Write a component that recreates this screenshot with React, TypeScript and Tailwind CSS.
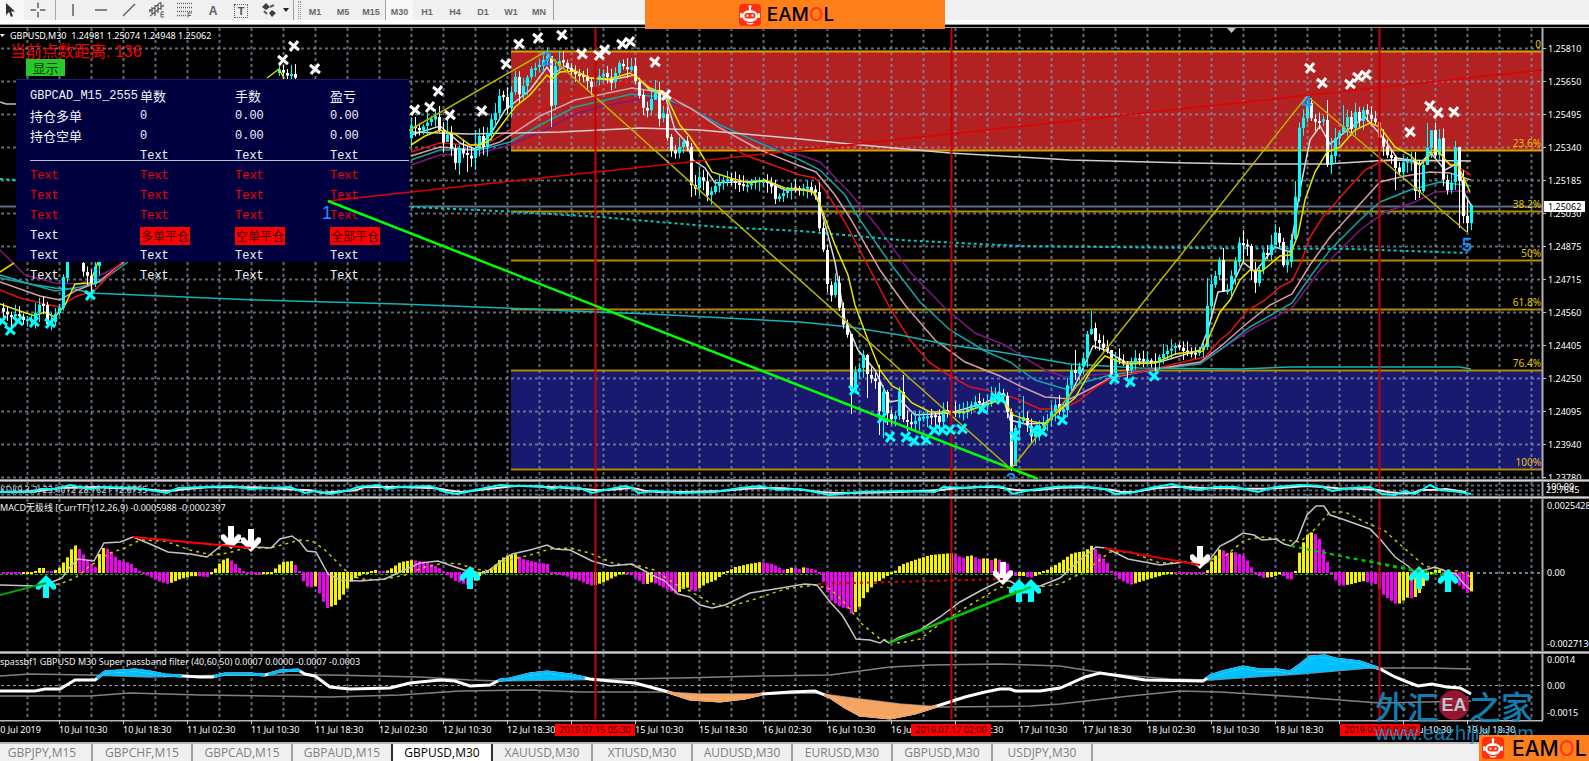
import type { ReactNode } from "react";

type Pt = [number, number];

const TIMEFRAMES = ["M1", "M5", "M15", "M30", "H1", "H4", "D1", "W1", "MN"];

const TABS = [
  "GBPJPY,M15",
  "GBPCHF,M15",
  "GBPCAD,M15",
  "GBPAUD,M15",
  "GBPUSD,M30",
  "XAUUSD,M30",
  "XTIUSD,M30",
  "AUDUSD,M30",
  "EURUSD,M30",
  "GBPUSD,M30",
  "USDJPY,M30",
];

const PRICES = [
  "1.25810", "1.25650", "1.25495", "1.25340", "1.25185", "1.25030", "1.24875",
  "1.24715", "1.24560", "1.24405", "1.24250", "1.24095", "1.23940", "1.23780",
];

// One label every 64px, an empty one where a marked time takes the slot
const TIMES = [
  "10 Jul 2019", "10 Jul 10:30", "10 Jul 18:30", "11 Jul 02:30", "11 Jul 10:30",
  "11 Jul 18:30", "12 Jul 02:30", "12 Jul 10:30", "12 Jul 18:30", "",
  "15 Jul 10:30", "15 Jul 18:30", "16 Jul 02:30", "16 Jul 10:30", "16 Jul 18:30",
  "17 Jul 02:30", "17 Jul 10:30", "17 Jul 18:30", "18 Jul 02:30", "18 Jul 10:30",
  "18 Jul 18:30", "", "19 Jul 10:30", "19 Jul 18:30",
];

const MARKED_TIMES = [
  { x: 555, label: "2019.07.15 05:30" },
  { x: 911, label: "2019.07.17 02:00" },
  { x: 1340, label: "2019.07.19 07:30" },
];

const RED_LINES = [595, 951, 1379];

const FIBS = [
  { y: 51, label: "0" },
  { y: 150, label: "23.6%" },
  { y: 211, label: "38.2%" },
  { y: 260, label: "50%" },
  { y: 309, label: "61.8%" },
  { y: 370, label: "76.4%" },
  { y: 469, label: "100%" },
];

// Close price path, one candle every 4px
const CLOSE_LEFT: Pt[] = [
  [0, 309], [8, 316], [16, 314], [24, 321], [32, 319], [39, 304], [43, 305], [47, 324],
  [51, 322], [55, 313], [59, 308], [63, 278], [67, 262],
];

const CLOSE_MID: Pt[] = [[79, 263], [83, 272], [87, 276], [91, 284], [95, 266], [98, 262]];

const CLOSE_RIGHT: Pt[] = [
  [407, 138], [411, 126], [419, 130], [427, 122], [435, 117], [439, 130], [443, 142], [447, 134],
  [455, 163], [459, 149], [463, 153], [471, 158], [475, 148], [479, 136], [483, 147], [491, 120],
  [495, 113], [499, 95], [503, 97], [507, 108], [511, 92], [515, 77], [519, 95], [523, 86],
  [531, 68], [539, 66], [547, 56], [551, 105], [555, 66], [560, 59], [567, 68], [575, 74],
  [583, 76], [591, 87], [595, 80], [603, 73], [611, 82], [619, 64], [627, 70], [631, 66],
  [635, 82], [643, 108], [647, 110], [655, 90], [659, 118], [663, 114], [667, 137], [671, 150],
  [675, 153], [683, 141], [687, 147], [691, 185], [697, 190], [700, 171], [707, 195], [711, 192],
  [715, 186], [725, 178], [735, 183], [745, 186], [755, 181], [765, 181], [772, 187], [775, 199],
  [783, 193], [790, 187], [800, 189], [807, 187], [815, 192], [819, 228], [823, 250], [827, 285],
  [831, 295], [835, 283], [839, 308], [843, 325], [847, 334], [851, 390], [855, 372], [859, 368],
  [863, 355], [867, 375], [875, 382], [879, 412], [883, 392], [887, 414], [891, 419], [895, 416],
  [899, 392], [903, 420], [911, 424], [920, 417], [930, 415], [935, 416], [939, 422], [943, 410],
  [955, 412], [965, 412], [975, 401], [985, 407], [992, 395], [1000, 393], [1003, 396], [1007, 412],
  [1011, 466], [1015, 428], [1019, 421], [1023, 418], [1027, 426], [1031, 437], [1039, 426],
  [1047, 420], [1055, 404], [1059, 412], [1063, 410], [1067, 385], [1071, 370], [1075, 374],
  [1083, 358], [1087, 334], [1091, 328], [1095, 340], [1103, 347], [1107, 350], [1111, 373],
  [1115, 358], [1121, 362], [1127, 370], [1133, 358], [1145, 360], [1155, 362], [1165, 352],
  [1175, 345], [1185, 352], [1195, 353], [1203, 347], [1207, 306], [1211, 285], [1215, 275],
  [1219, 260], [1223, 292], [1227, 290], [1231, 275], [1235, 262], [1239, 243], [1247, 246],
  [1251, 270], [1255, 283], [1259, 270], [1263, 253], [1267, 255], [1271, 245], [1275, 233],
  [1279, 242], [1283, 265], [1287, 262], [1291, 239], [1295, 197], [1299, 128], [1303, 118],
  [1307, 103], [1311, 119], [1317, 122], [1323, 120], [1327, 165], [1331, 156], [1335, 138],
  [1343, 127], [1347, 117], [1351, 128], [1355, 112], [1359, 121], [1363, 110], [1367, 115],
  [1375, 122], [1379, 138], [1387, 155], [1393, 158], [1397, 177], [1403, 162], [1411, 161],
  [1415, 190], [1419, 191], [1423, 165], [1427, 148], [1431, 130], [1435, 155], [1439, 138],
  [1443, 180], [1447, 190], [1451, 182], [1455, 147], [1459, 180], [1463, 216], [1467, 223],
  [1471, 205],
];

// Wicks that reach well past the body: x -> [high, low]
const LONG_WICKS: Record<number, Pt> = {
  439: [106, 132], 459: [145, 175], 467: [146, 172], 475: [130, 170], 551: [92, 127], 447: [120, 140],
  631: [58, 72], 655: [80, 96], 691: [143, 197], 775: [180, 204], 851: [334, 414], 867: [354, 398],
  879: [365, 435], 883: [385, 438], 887: [390, 425], 903: [375, 422], 1015: [425, 466], 1023: [396, 424],
  1091: [311, 335], 1075: [350, 380], 1111: [350, 378], 1207: [278, 350], 1223: [248, 292],
  1275: [224, 237], 1243: [230, 262], 1255: [262, 293], 1295: [181, 240], 1327: [100, 167],
  1331: [138, 174], 1343: [105, 130], 1395: [155, 190], 1419: [160, 198], 1427: [123, 150],
  1431: [131, 158], 1455: [141, 190], 1459: [148, 228], 1467: [200, 232], 1471: [204, 230],
};

const FAST_MA: Pt[] = [
  [411, 145], [425, 136], [440, 130], [455, 134], [470, 145], [480, 145], [490, 140], [500, 127],
  [515, 107], [530, 95], [547, 75], [552, 79], [560, 72], [575, 71], [590, 78], [610, 79],
  [630, 73], [640, 80], [650, 88], [660, 92], [668, 100], [680, 125], [690, 137], [700, 152],
  [712, 172], [730, 178], [750, 183], [765, 180], [785, 188], [800, 189], [815, 193], [822, 210],
  [835, 245], [848, 275], [855, 305], [868, 340], [880, 370], [892, 386], [900, 390], [912, 403],
  [930, 412], [965, 412], [985, 405], [1000, 400], [1007, 405], [1013, 415], [1030, 421],
  [1045, 424], [1060, 410], [1075, 398], [1090, 372], [1105, 356], [1125, 364], [1155, 363],
  [1175, 354], [1190, 352], [1203, 351], [1210, 335], [1220, 312], [1230, 300], [1240, 280],
  [1250, 270], [1262, 271], [1280, 256], [1290, 255], [1298, 235], [1305, 200], [1315, 172],
  [1327, 152], [1340, 147], [1355, 130], [1370, 123], [1380, 127], [1395, 147], [1410, 155],
  [1420, 165], [1430, 155], [1437, 150], [1450, 165], [1458, 165], [1470, 192],
];

const MA_LINES: { color: string; points: Pt[] }[] = [
  {
    color: "#7d1682",
    points: [
      [411, 165], [440, 155], [480, 153], [510, 145], [545, 130], [575, 114], [600, 107], [640, 99],
      [660, 100], [690, 108], [730, 130], [780, 150], [800, 155], [820, 162], [850, 193], [880, 230],
      [910, 272], [945, 308], [975, 333], [1005, 345], [1025, 358], [1045, 370], [1065, 377],
      [1090, 375], [1120, 373], [1160, 368], [1200, 363], [1250, 330], [1292, 308], [1320, 270],
      [1360, 230], [1385, 212], [1415, 202], [1435, 192], [1460, 191], [1471, 193],
    ],
  },
  {
    color: "#12a5a5",
    points: [
      [411, 160], [440, 150], [480, 150], [510, 142], [540, 125], [575, 107], [632, 94], [660, 97],
      [690, 108], [720, 125], [760, 143], [800, 160], [820, 170], [845, 195], [860, 220], [890, 263],
      [920, 302], [950, 330], [985, 351], [1010, 362], [1035, 380], [1065, 389], [1085, 382],
      [1110, 375], [1150, 370], [1200, 364], [1220, 350], [1250, 327], [1292, 303], [1310, 277],
      [1330, 250], [1360, 220], [1380, 202], [1410, 190], [1440, 182], [1471, 186],
    ],
  },
  {
    color: "#d89ca4",
    points: [
      [411, 156], [440, 147], [475, 150], [500, 142], [540, 116], [575, 100], [632, 88], [660, 92],
      [690, 108], [720, 128], [760, 150], [800, 166], [816, 172], [835, 195], [850, 218], [880, 270],
      [905, 305], [935, 340], [965, 362], [1000, 376], [1020, 386], [1045, 397], [1070, 399],
      [1090, 389], [1110, 378], [1150, 370], [1200, 362], [1220, 347], [1245, 325], [1270, 305],
      [1292, 294], [1310, 265], [1330, 237], [1350, 215], [1380, 182], [1405, 176], [1430, 172],
      [1450, 173], [1471, 180],
    ],
  },
  {
    color: "#e31212",
    points: [
      [411, 152], [440, 143], [470, 145], [490, 142], [515, 127], [545, 105], [570, 95], [600, 87],
      [632, 80], [650, 85], [670, 97], [690, 113], [720, 138], [745, 155], [770, 164], [800, 175],
      [815, 178], [825, 190], [845, 222], [865, 260], [890, 308], [910, 340], [930, 363], [950, 376],
      [970, 387], [1000, 393], [1020, 400], [1040, 409], [1063, 409], [1080, 400], [1095, 388],
      [1115, 376], [1140, 372], [1170, 365], [1205, 357], [1220, 340], [1230, 332], [1247, 311],
      [1265, 300], [1280, 287], [1292, 281], [1300, 265], [1310, 237], [1322, 218], [1345, 192],
      [1365, 170], [1380, 162], [1400, 160], [1415, 164], [1440, 160], [1455, 165], [1471, 175],
    ],
  },
  {
    color: "#d8d8d8",
    points: [
      [411, 135], [440, 126], [460, 143], [475, 149], [490, 135], [505, 110], [530, 90], [547, 67],
      [552, 75], [565, 66], [590, 78], [610, 80], [635, 75], [650, 90], [665, 95], [675, 130],
      [685, 141], [693, 160], [705, 168], [715, 183], [735, 182], [765, 181], [785, 190], [812, 190],
      [820, 205], [835, 262], [845, 320], [858, 350], [875, 370], [890, 402], [900, 400], [915, 415],
      [950, 413], [985, 403], [1002, 394], [1010, 420], [1025, 424], [1045, 423], [1065, 405],
      [1080, 375], [1093, 346], [1105, 350], [1125, 362], [1160, 362], [1200, 350], [1208, 330],
      [1218, 292], [1230, 290], [1243, 262], [1255, 272], [1275, 247], [1290, 252], [1300, 190],
      [1310, 140], [1320, 126], [1330, 144], [1350, 128], [1365, 117], [1385, 140], [1397, 158],
      [1410, 160], [1420, 165], [1430, 152], [1445, 170], [1458, 163], [1465, 195], [1471, 205],
    ],
  },
  { color: "#7d1682", points: [[0, 250], [25, 275], [55, 283], [80, 284], [105, 273], [125, 262]] },
  { color: "#12b5b5", points: [[0, 275], [30, 284], [55, 288], [75, 289], [90, 293], [257, 300], [400, 304], [530, 309], [570, 311], [650, 314], [800, 322], [850, 327], [900, 335], [950, 345], [1000, 352], [1070, 364], [1140, 368], [1240, 369], [1290, 367], [1460, 367], [1471, 369]] },
  { color: "#12a5a5", points: [[0, 278], [30, 284], [55, 291], [80, 287], [100, 282], [128, 262]] },
  { color: "#d89ca4", points: [[0, 282], [40, 296], [60, 300], [75, 291], [98, 282], [124, 262]] },
  { color: "#e31212", points: [[0, 290], [20, 298], [45, 304], [60, 307], [75, 297], [95, 290], [122, 262]] },
  { color: "#e5e500", points: [[0, 304], [20, 311], [35, 316], [44, 312], [55, 317], [65, 305], [75, 284], [90, 283], [98, 262]] },
  { color: "#c0c0c0", points: [[0, 102], [6, 104], [16, 104]] },
  {
    color: "#d5cccc",
    points: [
      [411, 132], [470, 134], [560, 132], [640, 128], [700, 130], [800, 139], [850, 144], [950, 153],
      [1070, 160], [1189, 163], [1250, 164], [1327, 164], [1390, 160], [1471, 161],
    ],
  },
];

const SELL_MARKS: Pt[] = [
  [283, 60], [294, 46], [315, 69], [415, 110], [430, 107], [438, 91], [450, 115], [482, 111],
  [506, 64], [519, 44], [538, 38], [562, 35], [582, 54], [599, 55], [605, 50], [622, 44], [630, 42],
  [655, 62], [666, 95], [1310, 68], [1322, 83], [1350, 84], [1358, 77], [1366, 75], [1410, 132],
  [1430, 106], [1438, 113], [1454, 112],
];

const BUY_MARKS: Pt[] = [
  [2, 321], [10, 330], [18, 321], [34, 322], [50, 323], [90, 295], [854, 390], [882, 418],
  [890, 437], [906, 437], [914, 441], [926, 440], [934, 430], [942, 430], [950, 430], [962, 429],
  [982, 409], [996, 397], [1001, 399], [1015, 436], [1034, 430], [1042, 432], [1062, 420],
  [1114, 379], [1130, 382], [1154, 376],
];

const OSC: Pt[] = [
  [0, 492], [33, 492], [40, 489], [55, 489], [70, 485], [90, 489], [105, 487], [135, 488],
  [155, 491], [167, 493], [178, 488], [205, 487], [230, 486], [250, 489], [290, 487], [305, 493],
  [315, 491], [330, 494], [350, 490], [358, 487], [378, 485], [387, 489], [400, 487], [430, 486],
  [445, 492], [457, 494], [475, 490], [500, 485], [512, 486], [540, 486], [552, 489], [560, 487],
  [580, 488], [592, 493], [605, 490], [625, 486], [632, 488], [638, 493], [655, 491], [680, 493],
  [715, 492], [740, 488], [760, 486], [778, 490], [800, 489], [815, 492], [830, 495], [860, 492],
  [900, 491], [935, 492], [943, 487], [970, 488], [990, 486], [1003, 487], [1013, 494], [1030, 490],
  [1055, 487], [1080, 486], [1105, 489], [1115, 494], [1130, 493], [1150, 488], [1172, 484],
  [1185, 488], [1200, 490], [1215, 487], [1235, 487], [1258, 492], [1275, 487], [1300, 485],
  [1320, 486], [1332, 491], [1350, 488], [1370, 487], [1382, 494], [1395, 495], [1405, 491],
  [1415, 494], [1430, 485], [1440, 490], [1460, 492], [1471, 494],
];

// Histogram height in px, positive is up
const HIST: Pt[] = [
  [0, -1], [20, -2], [34, -1], [38, 5], [44, 5], [48, 1], [58, 4], [68, 17], [72, 26], [76, 28],
  [88, 12], [96, 5], [99, 19], [103, 25], [109, 24], [113, 18], [120, 12], [130, 10], [137, 3],
  [142, -1], [150, -5], [160, -10], [168, -12], [180, -7], [192, -4], [207, -5], [212, 0], [216, 6],
  [222, 13], [228, 15], [234, 10], [240, 4], [244, -1], [260, -3], [272, 0], [276, 6], [282, 11],
  [292, 12], [298, 4], [302, -8], [308, -16], [317, -14], [320, -25], [327, -36], [335, -33],
  [345, -20], [352, -8], [362, -2], [375, 3], [382, 0], [390, 4], [400, 11], [412, 13], [425, 11],
  [438, 6], [444, -1], [455, -9], [467, -13], [476, -8], [482, 0], [492, 5], [500, 14], [508, 18],
  [516, 19], [522, 14], [530, 12], [547, 9], [550, -1], [565, -4], [580, -9], [592, -14],
  [604, -10], [620, -2], [632, -3], [644, -13], [652, -10], [660, -14], [676, -22], [686, -15],
  [694, -20], [705, -12], [716, -8], [724, 0], [735, 6], [748, 9], [760, 11], [772, 9], [784, 3],
  [793, 6], [799, 4], [804, 6], [816, 3], [819, -2], [823, -10], [830, -28], [840, -35], [848, -37],
  [852, -43], [858, -37], [864, -24], [873, -13], [882, -7], [892, -1], [900, 8], [914, 13],
  [930, 18], [952, 20], [962, 15], [970, 18], [979, 14], [986, 15], [991, 13], [996, 15],
  [1008, 9], [1012, -4], [1024, -4], [1030, -6], [1040, -2], [1048, 4], [1060, 11], [1072, 20],
  [1085, 22], [1092, 28], [1098, 20], [1107, 10], [1112, -1], [1120, -8], [1130, -13], [1145, -8],
  [1160, -4], [1170, 0], [1190, -1], [1205, -2], [1210, 10], [1220, 25], [1226, 20], [1234, 21],
  [1244, 17], [1250, 8], [1254, -1], [1262, -6], [1272, -5], [1280, -2], [1290, -9], [1294, -3],
  [1300, 25], [1308, 40], [1313, 41], [1320, 33], [1328, 8], [1332, -5], [1340, -14], [1352, -12],
  [1362, -9], [1375, -12], [1384, -24], [1397, -33], [1408, -25], [1413, -27], [1420, -20],
  [1426, -8], [1430, -1], [1437, 5], [1444, -1], [1455, -10], [1467, -21], [1472, -19],
];

const MACD: Pt[] = [
  [0, 586], [35, 587], [50, 584], [62, 579], [70, 568], [78, 560], [94, 562], [104, 544], [120, 543],
  [133, 538], [150, 545], [168, 553], [190, 555], [207, 558], [222, 546], [240, 543], [256, 548],
  [271, 549], [280, 540], [292, 537], [300, 543], [307, 552], [316, 553], [328, 575], [340, 581],
  [360, 582], [385, 580], [400, 573], [420, 564], [438, 562], [455, 568], [470, 573], [485, 574],
  [500, 563], [512, 555], [530, 551], [547, 546], [555, 550], [570, 551], [592, 562], [610, 567],
  [632, 565], [650, 575], [665, 582], [678, 595], [690, 598], [700, 606], [712, 609], [725, 606],
  [750, 594], [775, 590], [805, 585], [817, 586], [830, 603], [842, 616], [848, 626], [856, 640],
  [870, 641], [880, 644], [884, 641], [889, 644], [900, 638], [920, 631], [940, 618], [960, 603],
  [980, 592], [1000, 582], [1010, 582], [1018, 587], [1040, 587], [1060, 579], [1080, 561],
  [1096, 548], [1106, 549], [1128, 560], [1160, 566], [1185, 563], [1200, 567], [1208, 563],
  [1220, 547], [1232, 541], [1243, 534], [1254, 536], [1262, 541], [1276, 540], [1284, 545],
  [1291, 547], [1297, 541], [1307, 516], [1316, 507], [1324, 507], [1330, 516], [1345, 521],
  [1370, 530], [1380, 540], [1395, 558], [1408, 567], [1414, 573], [1425, 571], [1435, 568],
  [1445, 572], [1456, 575], [1464, 585], [1471, 591],
];

const SIGNAL: Pt[] = [
  [35, 587], [60, 585], [75, 579], [90, 567], [110, 554], [125, 549], [140, 541], [165, 542],
  [190, 551], [212, 556], [228, 554], [245, 549], [270, 549], [285, 545], [300, 541], [312, 542],
  [325, 551], [345, 571], [360, 580], [380, 581], [405, 576], [425, 568], [445, 564], [460, 565],
  [475, 570], [490, 572], [505, 562], [530, 556], [550, 550], [570, 549], [590, 554], [615, 565],
  [635, 566], [655, 571], [675, 585], [690, 592], [710, 604], [728, 608], [755, 600], [785, 590],
  [815, 586], [830, 590], [845, 604], [862, 625], [880, 640], [900, 644], [920, 640], [945, 621],
  [970, 606], [1000, 588], [1025, 590], [1060, 585], [1085, 572], [1110, 553], [1130, 553],
  [1160, 564], [1200, 563], [1225, 557], [1245, 541], [1262, 538], [1285, 541], [1300, 543],
  [1315, 530], [1330, 513], [1345, 513], [1365, 523], [1385, 532], [1405, 550], [1425, 567],
  [1445, 571], [1460, 572], [1471, 578],
];

const PASSBAND: Pt[] = [
  [0, 694], [35, 694], [45, 692], [60, 692], [75, 683], [95, 683], [105, 675], [135, 673], [150, 675],
  [165, 678], [200, 680], [212, 680], [225, 677], [250, 677], [265, 678], [280, 674], [298, 673],
  [305, 677], [315, 679], [330, 690], [350, 692], [390, 691], [410, 686], [440, 683], [455, 684],
  [470, 689], [490, 688], [500, 683], [510, 682], [530, 677], [547, 675], [570, 678], [590, 682],
  [610, 684], [635, 686], [665, 694], [690, 702], [720, 704], [745, 701], [762, 697], [790, 695],
  [815, 694], [830, 700], [845, 710], [860, 718], [890, 721], [915, 716], [937, 709], [965, 700],
  [985, 695], [1000, 692], [1010, 692], [1015, 694], [1040, 694], [1060, 691], [1085, 680],
  [1100, 676], [1120, 679], [1145, 683], [1203, 684], [1210, 679], [1222, 675], [1243, 670],
  [1260, 673], [1278, 673], [1290, 675], [1300, 668], [1310, 660], [1325, 659], [1335, 662],
  [1360, 665], [1380, 672], [1395, 680], [1410, 686], [1418, 689], [1432, 687], [1447, 690],
  [1460, 691], [1471, 697],
];

const UPPER_BAND: Pt[] = [
  [0, 679], [30, 677], [90, 678], [150, 680], [230, 678], [330, 678], [420, 680], [470, 683],
  [500, 684], [560, 683], [680, 681], [760, 679], [830, 678], [860, 674], [890, 670], [930, 668],
  [1000, 667], [1060, 669], [1085, 673], [1110, 677], [1170, 682], [1210, 683], [1300, 677],
  [1370, 671], [1430, 671], [1471, 672],
];

const LOWER_BAND: Pt[] = [
  [0, 699], [90, 699], [130, 696], [200, 698], [330, 700], [400, 698], [460, 694], [530, 693],
  [580, 695], [664, 695], [700, 697], [762, 697], [815, 696], [860, 702], [900, 707], [940, 710],
  [1030, 709], [1060, 707], [1130, 699], [1180, 694], [1220, 695], [1300, 700], [1380, 706],
  [1471, 704],
];

function valueAt(points: Pt[], x: number): number {
  for (let i = 1; i < points.length; i++) {
    const [x0, y0] = points[i - 1];
    const [x1, y1] = points[i];
    if (x <= x1) return y0 + ((y1 - y0) * (x - x0)) / (x1 - x0);
  }
  return points[points.length - 1][1];
}

function toLine(points: Pt[]): string {
  return points.map(([x, y]) => `${x},${y}`).join(" ");
}

function slicePoints(points: Pt[], from: number, to: number): Pt[] {
  return [
    [from, valueAt(points, from)],
    ...points.filter(([x]) => x > from && x < to),
    [to, valueAt(points, to)],
  ];
}

function areaBetween(a: Pt[], b: Pt[], from: number, to: number): string {
  return toLine([...slicePoints(a, from, to), ...slicePoints(b, from, to).reverse()]);
}

function noise(n: number): number {
  const v = Math.sin(n * 12.9898) * 43758.5453;
  return v - Math.floor(v);
}

function Polyline({ points, color, width = 1, dash }: { points: Pt[]; color: string; width?: number; dash?: string }) {
  return <polyline points={toLine(points)} fill="none" stroke={color} strokeWidth={width} strokeDasharray={dash} />;
}

function Grid({ top, bottom, rows = [] }: { top: number; bottom: number; rows?: number[] }) {
  const cols = Array.from({ length: 48 }, (_, i) => 27 + i * 32);
  return (
    <g stroke="#8494ac" strokeOpacity={0.7} strokeWidth={2}>
      {cols.map((x) => (
        <line key={x} x1={x + 0.5} x2={x + 0.5} y1={top} y2={bottom} strokeDasharray="3 3" />
      ))}
      {rows.map((y) => (
        <line key={y} x1={1} x2={1542} y1={y + 0.5} y2={y + 0.5} strokeDasharray="3 3" />
      ))}
    </g>
  );
}

function RedLines({ top, bottom }: { top: number; bottom: number }) {
  return (
    <g stroke="#c80000" strokeWidth={2}>
      {RED_LINES.map((x) => (
        <line key={x} x1={x + 0.5} x2={x + 0.5} y1={top} y2={bottom} />
      ))}
    </g>
  );
}

function Pane({ top, height, children }: { top: number; height: number; children: ReactNode }) {
  return (
    <svg
      viewBox={`0 ${top} 1589 ${height}`}
      className="block h-auto w-full font-['Noto_Sans','Noto_Sans_CJK_SC',sans-serif] text-[9px]"
    >
      {children}
      <line x1={1542.5} x2={1542.5} y1={top} y2={top + height} stroke="#b0b0b0" strokeWidth={2} />
    </svg>
  );
}

function Splitter() {
  return <div className="h-[3px] border-y border-[#8a8a8a] bg-[#d4d4d4]" />;
}

function Candles({ path, from, to }: { path: Pt[]; from: number; to: number }) {
  const items: ReactNode[] = [];
  for (let x = from; x <= to; x += 4) {
    const open = valueAt(path, x - 4);
    const close = valueAt(path, x) + (noise(x) - 0.5) * 2;
    const up = close <= open;
    const color = up ? "#00ffff" : "#ffffff";
    const top = Math.min(open, close);
    const body = Math.max(2, Math.abs(open - close));
    const [high, low] = LONG_WICKS[x] ?? [top - 2 - noise(x + 1) * 8, top + body + 2 + noise(x + 2) * 8];
    items.push(
      <g key={x} fill={color}>
        <rect x={x} y={high} width={1} height={low - high} />
        <rect x={x - 1} y={top} width={3} height={body} />
      </g>
    );
  }
  return <>{items}</>;
}

function Cross({ x, y, color }: { x: number; y: number; color: string }) {
  return <path d={`M${x - 5} ${y - 4}L${x + 5} ${y + 4}M${x + 4} ${y - 5}L${x - 4} ${y + 5}`} stroke={color} strokeWidth={3} />;
}

function Arrow({ x, y, up }: { x: number; y: number; up?: boolean }) {
  const d = "M-3 0H3V12L7 8L10 9V13L0 23L-10 13V9L-7 8L-3 12Z";
  return (
    <path
      d={d}
      transform={up ? `translate(${x} ${y + 23}) scale(1 -1)` : `translate(${x} ${y})`}
      fill={up ? "#00ffff" : "#ffffff"}
    />
  );
}

function PricePane() {
  return (
    <Pane top={28} height={451}>
      <rect x={511} y={52} width={1031} height={98} fill="#b22222" />
      <rect x={511} y={371} width={1031} height={98} fill="#191970" />
      <Grid top={28} bottom={479} rows={PRICES.map((_, i) => 48 + i * 33)} />
      <line x1={0} x2={1543} y1={206.5} y2={206.5} stroke="#5f7084" strokeWidth={2} />
      {FIBS.map((fib) => (
        <g key={fib.label}>
          <line x1={511} x2={1542} y1={fib.y + 0.5} y2={fib.y + 0.5} stroke={fib.y < 151 ? "#e0a000" : "#b08c00"} strokeWidth={2} />
          <text x={1541} y={fib.y - 3} textAnchor="end" fill="#e8c400" className="text-[10px]">{fib.label}</text>
        </g>
      ))}

      {MA_LINES.map((line, i) => (
        <Polyline key={i} points={line.points} color={line.color} width={1.5} />
      ))}
      <Polyline points={[[0, 179], [16, 180]]} color="#00d0d0" width={2} dash="3 3" />
      <Polyline
        points={[[411, 207], [500, 211], [600, 217], [720, 227], [800, 231], [900, 240], [1020, 246], [1189, 248], [1350, 249], [1467, 253]]}
        color="#00c8c8"
        width={2}
        dash="3 3"
      />

      <Candles path={CLOSE_LEFT} from={3} to={67} />
      <Candles path={CLOSE_MID} from={83} to={99} />
      <Candles path={[[275, 73], [279, 70], [287, 76], [291, 74], [295, 78]]} from={279} to={295} />
      <Candles path={CLOSE_RIGHT} from={411} to={1471} />

      <Polyline points={FAST_MA} color="#e5e500" width={1.5} />
      <Polyline points={[[267, 78], [279, 69], [284, 78]]} color="#d8d800" width={1.5} />
      <Polyline points={[[0, 272], [14, 263]]} color="#d8d800" width={1.5} />
      <Polyline points={[[408, 131], [545, 52], [1011, 469], [1307, 96], [1467, 232]]} color="#b8b400" width={1.5} />

      <RedLines top={28} bottom={479} />
      {SELL_MARKS.map(([x, y], i) => (
        <Cross key={i} x={x} y={y} color="#ffffff" />
      ))}
      {BUY_MARKS.map(([x, y], i) => (
        <Cross key={i} x={x} y={y} color="#00ffff" />
      ))}
      <path d="M1227 28h9l-4.500 5z" fill="#b8c8d8" />
      <path d="M0 34h5l-3 3z" fill="#ffffff" />

      <g className="font-['Liberation_Sans',sans-serif] text-[18px]" fill="#1e90ff" stroke="#1e90ff" strokeWidth={0.5} textAnchor="middle">
        <text x={547} y={65}>2</text>
        <text x={1011} y={486}>3</text>
        <text x={1307} y={108}>4</text>
        <text x={1467} y={251}>5</text>
      </g>
      <text x={10} y={39} fill="#ffffff" xmlSpace="preserve">
        {"GBPUSD,M30  1.24981 1.25074 1.24948 1.25062"}
      </text>

      {PRICES.map((price, i) => (
        <g key={price}>
          <line x1={1543} x2={1546} y1={48.5 + i * 33} y2={48.5 + i * 33} stroke="#c0c0c0" />
          <text x={1548} y={52 + i * 33} fill="#ffffff">{price}</text>
        </g>
      ))}
      <rect x={1544} y={201} width={41} height={11} fill="#ffffff" />
      <text x={1548} y={210} fill="#000000">1.25062</text>
    </Pane>
  );
}

function OscillatorPane() {
  const average: Pt[] = OSC.map(([x, y], i) => [x + 6, (y + (OSC[i - 1]?.[1] ?? y) + (OSC[i + 1]?.[1] ?? y)) / 3]);
  return (
    <Pane top={482} height={14}>
      <Grid top={482} bottom={496} rows={[485, 490, 494]} />
      <text x={0} y={493} fill="#d0d0d0">KDJ(9,3,3) 23.4012 28.7621 12.6795</text>
      <RedLines top={482} bottom={496} />
      <Polyline points={average.slice(0, -1)} color="#ffe4e4" width={2} />
      <Polyline points={OSC} color="#00ffff" width={2} />
      <g fill="#ffffff">
        <text x={1546} y={490}>100.00</text>
        <text x={1546} y={493}>23.7645</text>
      </g>
    </Pane>
  );
}

function MacdPane() {
  const bars = Array.from({ length: 368 }, (_, i) => 3 + i * 4);
  return (
    <Pane top={500} height={152}>
      <Grid top={500} bottom={652} />
      <line x1={1477} x2={1542} y1={574} y2={574} stroke="#6f7f92" strokeWidth={2} strokeDasharray="3 3" />
      <line x1={0} x2={1475} y1={575.5} y2={575.5} stroke="#00b000" strokeWidth={1} strokeDasharray="3 2" />
      {bars.map((x) => {
        const value = valueAt(HIST, x);
        const rising = value >= valueAt(HIST, x - 4);
        const height = Math.max(2, Math.abs(value));
        return (
          <rect
            key={x}
            x={x - 1}
            y={value > 0 ? 574 - height : 573}
            width={3}
            height={height}
            fill={rising ? "#f4f400" : "#f400f4"}
          />
        );
      })}
      <Polyline points={SIGNAL} color="#c8c800" width={1.5} dash="3 4" />
      <Polyline points={MACD} color="#c4c4c4" width={1.5} />
      <RedLines top={500} bottom={652} />

      {[[231, 527], [251, 530], [1003, 563], [1200, 547]].map(([x, y]) => (
        <Arrow key={x} x={x} y={y} />
      ))}
      {[[46, 576], [470, 567], [1019, 580], [1031, 580], [1419, 567], [1448, 570]].map(([x, y]) => (
        <Arrow key={x} x={x} y={y} up />
      ))}

      <g fill="none">
        <path d="M133 538L251 549" stroke="#ff0000" strokeWidth={2} />
        <path d="M1104 549L1200 566" stroke="#e00000" strokeWidth={2} />
        <path d="M818 585L1003 580" stroke="#e00000" strokeWidth={2} strokeDasharray="3 4" />
        <path d="M0 596L46 584" stroke="#00a000" strokeWidth={2} />
        <path d="M889 644L1019 592M889 644L1031 588" stroke="#00c800" strokeWidth={2} />
        <path d="M1291 547L1419 573M1330 555L1448 577" stroke="#00c800" strokeWidth={2} strokeDasharray="4 4" />
      </g>

      <text x={0} y={512} fill="#f0f0f0">
        MACD无极线 [CurrTF] (12,26,9) -0.0005988 -0.0002397
      </text>
      <g fill="#ffffff">
        <text x={1547} y={510}>0.0025428</text>
        <text x={1547} y={577}>0.00</text>
        <text x={1547} y={648}>-0.0027136</text>
      </g>
    </Pane>
  );
}

function PassbandPane() {
  return (
    <Pane top={657} height={66}>
      <Grid top={657} bottom={722} />
      <line x1={1} x2={1542} y1={688.5} y2={688.5} stroke="#a0a0a0" strokeWidth={1} strokeDasharray="3 3" />
      <Polyline points={UPPER_BAND} color="#808080" width={1.5} />
      <Polyline points={LOWER_BAND} color="#808080" width={1.5} />
      <g fill="#00bfff">
        <polygon points={areaBetween(PASSBAND, UPPER_BAND, 97, 170)} />
        <polygon points={areaBetween(PASSBAND, UPPER_BAND, 500, 585)} />
        <polygon points={areaBetween(PASSBAND, UPPER_BAND, 1206, 1378)} />
      </g>
      <g fill="#f4a460">
        <polygon points={areaBetween(PASSBAND, LOWER_BAND, 668, 762)} />
        <polygon points={areaBetween(PASSBAND, LOWER_BAND, 822, 937)} />
      </g>
      <Polyline points={PASSBAND} color="#ffffff" width={3} />
      {[[97, 182], [214, 265], [268, 300], [498, 585], [1207, 1378]].map(([from, to]) => (
        <Polyline key={from} points={slicePoints(PASSBAND, from, to)} color="#00bfff" width={3} />
      ))}
      {[[667, 762], [824, 937]].map(([from, to]) => (
        <Polyline key={from} points={slicePoints(PASSBAND, from, to)} color="#f4a460" width={3} />
      ))}
      <RedLines top={657} bottom={722} />
      <text x={0} y={668} fill="#f0f0f0">
        spassbf1 GBPUSD M30 Super passband filter (40,60,50) 0.0007 0.0000 -0.0007 -0.0003
      </text>
      <g fill="#ffffff">
        <text x={1547} y={666}>0.0014</text>
        <text x={1547} y={692}>0.00</text>
        <text x={1547} y={719}>-0.0015</text>
      </g>
    </Pane>
  );
}

function TimeAxis() {
  return (
    <svg viewBox="0 723 1589 22" className="block h-auto w-full font-['Noto_Sans',sans-serif] text-[9px]">
      <line x1={0} x2={1543} y1={723.5} y2={723.5} stroke="#b8b8b8" strokeWidth={2} />
      {TIMES.map((time, i) => (
        <g key={i}>
          <line x1={i * 64 - 4.5} x2={i * 64 - 4.5} y1={723} y2={727} stroke="#d0d0d0" />
          {time && <text x={i * 64 - 5} y={736} fill="#ffffff">{time}</text>}
        </g>
      ))}
      {MARKED_TIMES.map((mark) => (
        <g key={mark.label}>
          <rect x={mark.x} y={727} width={80} height={12} fill="#ff0000" />
          <text x={mark.x + 40} y={736} textAnchor="middle" fill="#280000">{mark.label}</text>
        </g>
      ))}
    </svg>
  );
}

// Drawn over the order panel
function TrendOverlay() {
  return (
    <svg viewBox="0 28 1589 451" className="pointer-events-none absolute inset-x-0 top-0 block h-auto w-full">
      <line x1={328} y1={201} x2={1542} y2={70} stroke="#e00000" strokeWidth={1.5} />
      <line x1={328} y1={201} x2={1038} y2={479} stroke="#00ff00" strokeWidth={2.5} />
      <text x={322} y={219} fill="#1e90ff" className="font-['Liberation_Sans',sans-serif] text-[18px]">1</text>
    </svg>
  );
}

const CLOSE_BUTTONS = ["多单平仓", "空单平仓", "全部平仓"];

function isChinese(text: string): boolean {
  return /[\u4e00-\u9fff]/.test(text);
}

function OrderPanel() {
  const red = "text-[#f00000]";
  const rows: { cells: string[]; className?: string }[] = [
    { cells: ["GBPCAD_M15_2555", "单数", "手数", "盈亏"] },
    { cells: ["持仓多单", "0", "0.00", "0.00"] },
    { cells: ["持仓空单", "0", "0.00", "0.00"] },
    { cells: ["", "Text", "Text", "Text"] },
    { cells: ["Text", "Text", "Text", "Text"], className: red },
    { cells: ["Text", "Text", "Text", "Text"], className: red },
    { cells: ["Text", "Text", "Text", "Text"], className: red },
    { cells: ["Text", ...CLOSE_BUTTONS] },
    { cells: ["Text", "Text", "Text", "Text"] },
    { cells: ["Text", "Text", "Text", "Text"] },
  ];

  return (
    <div className="absolute left-4 top-[51px] h-[183px] w-[393px] border-t border-[#1c1c70] bg-[#000040] pl-[14px] pt-[6px]">
      <table className="w-[379px] table-fixed border-collapse font-['Liberation_Mono','Noto_Sans_CJK_SC',monospace] text-[12px] leading-5 text-[#eef4fa]">
        <colgroup>
          <col className="w-[110px]" />
          <col className="w-[95px]" />
          <col className="w-[95px]" />
          <col />
        </colgroup>
        <tbody>
          {rows.map((row, i) => (
            <tr key={i} className={row.className}>
              {row.cells.map((cell, j) => (
                <td
                  key={j}
                  className={`h-5 whitespace-nowrap p-0 ${
                    isChinese(cell) ? "font-['Noto_Sans_CJK_SC',sans-serif] text-[13px]" : ""
                  }`}
                >
                  {CLOSE_BUTTONS.includes(cell) ? (
                    <button className="block h-[18px] w-[50px] bg-[#ff0000] text-center text-[12px] leading-[18px] text-[#3c0000]">{cell}</button>
                  ) : (
                    cell
                  )}
                </td>
              ))}
            </tr>
          ))}
        </tbody>
      </table>
      <div className="absolute left-[14px] right-0 top-[80px] h-px bg-[#b4c2d2]" />
    </div>
  );
}

function EamolLogo({ large }: { large?: boolean }) {
  return (
    <div className={`flex items-center ${large ? "gap-2" : "gap-1.5"}`}>
      <svg viewBox="0 0 22 22" className="size-[22px]">
        <rect width={22} height={22} rx={4} fill="#ff3010" />
        <path d="M10 2h2v5h-2z" fill="#ffffff" />
        <circle cx={11} cy={2.500} r={1.500} fill="#ffffff" />
        <ellipse cx={11} cy={12} rx={8} ry={6} fill="#ffffff" />
        <rect x={1} y={9} width={2} height={5} rx={1} fill="#ffffff" />
        <rect x={19} y={9} width={2} height={5} rx={1} fill="#ffffff" />
        <rect x={5.500} y={9} width={11} height={5.500} rx={2.750} fill="#ff3010" />
        <circle cx={8.500} cy={11.700} r={1.100} fill="#ffffff" />
        <circle cx={13.500} cy={11.700} r={1.100} fill="#ffffff" />
        <path d="M7 18.500Q11 20 15 18.500L13 20.500H9Z" fill="#ffffff" />
      </svg>
      <span
        className={`font-['Inter',sans-serif] font-medium leading-none text-black ${large ? "text-[21px]" : "text-[19px]"}`}
      >
        EAM<span className="text-[#ff3b1f]">O</span>L
      </span>
    </div>
  );
}

function Watermark() {
  return (
    <div className="pointer-events-none absolute bottom-4 right-14 w-[158px] text-[#1494cc] opacity-85">
      <div className="flex items-center justify-between font-['Noto_Sans_CJK_SC',sans-serif] text-[32px] font-medium leading-8">
        <span>外汇</span>
        <span className="flex size-[30px] shrink-0 items-center justify-center rounded-full bg-[#b01838] font-['Liberation_Sans',sans-serif] text-[18px] font-bold text-[#d8e8f0]">EA</span>
        <span>之家</span>
      </div>
      <div className="font-['Liberation_Sans',sans-serif] text-[20px] leading-6">www.eazhijia.com</div>
    </div>
  );
}

function ToolIcon({ label, children }: { label: string; children: ReactNode }) {
  return (
    <button aria-label={label} className="flex h-full w-7 items-center justify-center">
      <svg viewBox="0 0 16 16" className="size-4" fill="none" stroke="#606060" strokeWidth={1}>
        {children}
      </svg>
    </button>
  );
}

function Toolbar() {
  return (
    <header className="flex h-6 items-stretch border-b-4 border-white bg-[#f0f0f0]">
      <button aria-label="Cursor" className="flex w-6 items-center justify-center bg-[#f8f8f8]">
        <svg viewBox="0 0 16 16" className="size-4">
          <path d="M2 1V13L5 10L7 15L9 14L7 9.500H11Z" fill="#303030" />
        </svg>
      </button>
      <ToolIcon label="Crosshair">
        <path d="M8 0.500V6M8 10V15.500M0.500 8H6M10 8H15.500" strokeWidth={1.500} />
      </ToolIcon>
      <div className="mx-[3px] w-px bg-[#a8a8a8]" />
      <ToolIcon label="Vertical line"><path d="M8 2V14" strokeWidth={1.500} /></ToolIcon>
      <ToolIcon label="Horizontal line"><path d="M2 8H14" strokeWidth={1.500} /></ToolIcon>
      <ToolIcon label="Trendline"><path d="M2 14L14 2" strokeWidth={1.500} /></ToolIcon>
      <ToolIcon label="Channel">
        <path d="M0 10L12 0M1 14L15 3M3 5V13M6 3V14M9 2V11M12 1V8M0 8h4" strokeWidth={1.300} />
        <path d="M15 10H12V15H15M12 12.500H15" />
      </ToolIcon>
      <ToolIcon label="Fibonacci">
        <path d="M0 1.500H15M0 5.500H15M0 9.500H15M0 13.500H9" strokeDasharray="1 1" strokeWidth={1.500} />
        <path d="M11 15.500V11H15M11 13.500H14" />
      </ToolIcon>
      <button className="w-7 pt-0.5 font-['Liberation_Sans',sans-serif] text-[12px] font-bold text-[#606060]">A</button>
      <button className="flex w-7 items-center justify-center pt-0.5">
        <span className="size-[14px] border border-dotted border-[#606060] font-['Liberation_Sans',sans-serif] text-[11px] font-bold leading-[13px] text-[#505050]">T</span>
      </button>
      <ToolIcon label="Arrows">
        <path d="M5 1L9 5L5 8L1 5ZM11 8L15 11L11 15L8 11Z" fill="#404040" stroke="none" />
        <path d="M3 9L6 12M9 5L13 3" strokeWidth={2} />
      </ToolIcon>
      <button aria-label="More arrows" className="flex w-[10px] items-center">
        <svg viewBox="0 0 6 4" className="h-1 w-1.5"><path d="M0 0H6L3 4Z" fill="#202020" /></svg>
      </button>
      <div className="w-px bg-[#a0a0a0]" />
      <div className="ml-1 my-px w-[3px] border-x border-dotted border-[#909090]" />
      {TIMEFRAMES.map((tf) => (
        <button
          key={tf}
          className={`w-7 pt-1 font-['Liberation_Sans',sans-serif] text-[9px] font-bold leading-4 text-[#686868] ${
            tf === "M30" ? "border-l border-[#a0a0a0] bg-[#f8f8f8]" : ""
          }`}
        >
          {tf}
        </button>
      ))}
      <div className="w-px bg-[#a0a0a0]" />
    </header>
  );
}

function ChartTabs() {
  return (
    <nav className="flex-1 overflow-hidden bg-[#f0f0f0] font-['Open_Sans',sans-serif] text-[12px] leading-[17px]">
      <div className="-ml-[7px] flex">
        {TABS.map((tab, i) => (
          <button
            key={i}
            className={`w-[100px] border-r-2 text-center ${
              i === 4 ? "border-[#303030] bg-white text-black" : i === 3 ? "border-[#303030] text-[#808080]" : "border-[#a0a0a0] text-[#808080]"
            }`}
          >
            {tab}
          </button>
        ))}
      </div>
    </nav>
  );
}

export default function App() {
  return (
    <div className="relative flex min-h-screen flex-col overflow-hidden bg-black">
      <Toolbar />
      <div className="h-1 border-y border-[#9a9a9a] bg-black" />

      <main>
        <div className="relative">
          <PricePane />
          <div className="absolute left-[10px] top-[14px] whitespace-nowrap font-['Liberation_Sans','Noto_Sans_CJK_SC',sans-serif] text-[16px] leading-5 text-[#f00000]">
            当前点数距离: 136
          </div>
          <button className="absolute left-[26px] top-[31px] h-[17px] w-[39px] bg-[#28c828] font-['Noto_Sans_CJK_SC',sans-serif] text-[13px] leading-[17px] text-[#0c400c]">
            显示
          </button>
          <OrderPanel />
          <TrendOverlay />
        </div>
        <Splitter />
        <OscillatorPane />
        <Splitter />
        <MacdPane />
        <Splitter />
        <PassbandPane />
        <TimeAxis />
      </main>

      <div className="h-[2px] bg-[#b8b8b8]" />
      <ChartTabs />
      <Watermark />

      <div className="absolute left-1/2 top-0 flex h-[29px] w-[300px] -translate-x-1/2 items-center justify-center bg-[#ff7f1a] pr-4">
        <EamolLogo />
      </div>
      <div className="absolute bottom-0 right-0 flex h-[26px] w-[110px] items-center bg-[#ff7f1a] pl-[3px]">
        <EamolLogo large />
      </div>
    </div>
  );
}
